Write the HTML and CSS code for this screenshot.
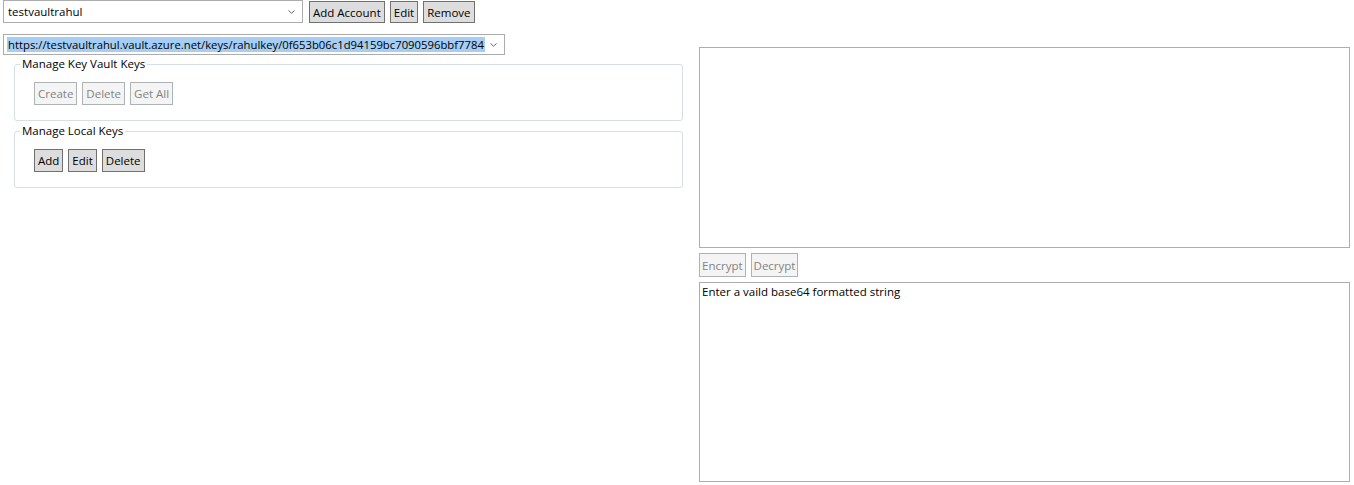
FILE: index.html
```html
<!DOCTYPE html>
<html>
<head>
<meta charset="utf-8">
<link rel="stylesheet" href="styles.css">
</head>
<body>
<div class="page">
  <div class="topbar">
    <div class="combo combo-account">
      <span class="combo-text">testvaultrahul</span>
      <svg class="chev" width="7" height="4" viewBox="0 0 7 4"><path d="M0.5 0.5 L3.5 3.2 L6.5 0.5" fill="none" stroke="#666" stroke-width="1"/></svg>
    </div>
    <button class="btn">Add Account</button>
    <button class="btn">Edit</button>
    <button class="btn">Remove</button>
  </div>
  <div class="main">
    <div class="left">
      <div class="combo combo-key">
        <span class="combo-text selected">https://testvaultrahul.vault.azure.net/keys/rahulkey/0f653b06c1d94159bc7090596bbf7784</span>
        <svg class="chev" width="7" height="4" viewBox="0 0 7 4"><path d="M0.5 0.5 L3.5 3.2 L6.5 0.5" fill="none" stroke="#666" stroke-width="1"/></svg>
      </div>
      <fieldset class="group group-vault">
        <legend>Manage Key Vault Keys</legend>
        <div class="btn-row">
          <button class="btn" disabled>Create</button>
          <button class="btn" disabled>Delete</button>
          <button class="btn" disabled>Get All</button>
        </div>
      </fieldset>
      <fieldset class="group group-local">
        <legend>Manage Local Keys</legend>
        <div class="btn-row">
          <button class="btn">Add</button>
          <button class="btn">Edit</button>
          <button class="btn">Delete</button>
        </div>
      </fieldset>
    </div>
    <div class="right">
      <div class="textbox textbox-top"></div>
      <div class="btn-row crypt-row">
        <button class="btn" disabled>Encrypt</button>
        <button class="btn" disabled>Decrypt</button>
      </div>
      <div class="textbox textbox-bottom">Enter a vaild base64 formatted string</div>
    </div>
  </div>
</div>
</body>
</html>
```

FILE: styles.css
```css
html, body {
  margin: 0;
  padding: 0;
  background: #ffffff;
}
body {
  font-family: "Open Sans", "Noto Sans", sans-serif;
  font-size: 11.5px;
  color: #000000;
}
.page {
  width: 1354px;
  height: 485px;
  overflow: hidden;
}
.topbar {
  display: flex;
  align-items: flex-start;
  padding-left: 3px;
  gap: 5px;
}
.combo {
  box-sizing: border-box;
  display: flex;
  align-items: center;
  justify-content: space-between;
  border: 1px solid #acacac;
  background: #ffffff;
  padding: 0 7px 0 3px;
}
.combo-account {
  width: 300px;
  height: 23px;
  margin-right: 1px;
}
.combo-text {
  white-space: nowrap;
  line-height: 16px;
  padding: 0 1px;
}
.selected {
  background: #a6cdf3;
  line-height: 15px;
  font-size: 11.3px;
}
.chev {
  flex: none;
}
.btn {
  box-sizing: border-box;
  height: 23px;
  margin: 0;
  padding: 0 3px;
  font-family: inherit;
  font-size: 11.5px;
  color: #000000;
  background: #dddddd;
  border: 1px solid #707070;
  border-radius: 0;
  line-height: 19px;
}
.topbar .btn {
  margin-top: 1px;
  height: 22px;
}
.btn:disabled {
  background: #f4f4f4;
  border-color: #adb2b5;
  color: #838383;
}
.main {
  display: flex;
  align-items: flex-start;
}
.left {
  width: 696px;
  padding-left: 3px;
  box-sizing: border-box;
}
.combo-key {
  width: 502px;
  height: 21px;
  margin-top: 11px;
  padding-left: 3px;
}
.group {
  box-sizing: border-box;
  width: 669px;
  margin: 0 0 0 11px;
  border: 1px solid #d5dfe5;
  border-radius: 3px;
  padding: 10px 19px 15px 19px;
}
.group legend {
  padding: 0 2px;
  margin-left: -14px;
  line-height: 16px;
  font-size: 11.5px;
}
.group-vault {
  margin-top: 1px;
}
.group-local {
  margin-top: 2px;
}
.btn-row {
  display: flex;
  gap: 5px;
}
.group .btn-row .btn {
  padding: 0 3px;
}
.right {
  width: 651px;
  margin-left: 3px;
  padding-top: 24px;
}
.textbox {
  box-sizing: border-box;
  width: 651px;
  border: 1px solid #abadb3;
  background: #ffffff;
  padding: 1px 2px;
  line-height: 16px;
}
.textbox-top {
  height: 201px;
}
.crypt-row {
  margin-top: 5px;
  gap: 5px;
}
.crypt-row .btn {
  height: 24px;
  padding: 0 2px;
}
.textbox-bottom {
  margin-top: 5px;
  height: 200px;
}
```
